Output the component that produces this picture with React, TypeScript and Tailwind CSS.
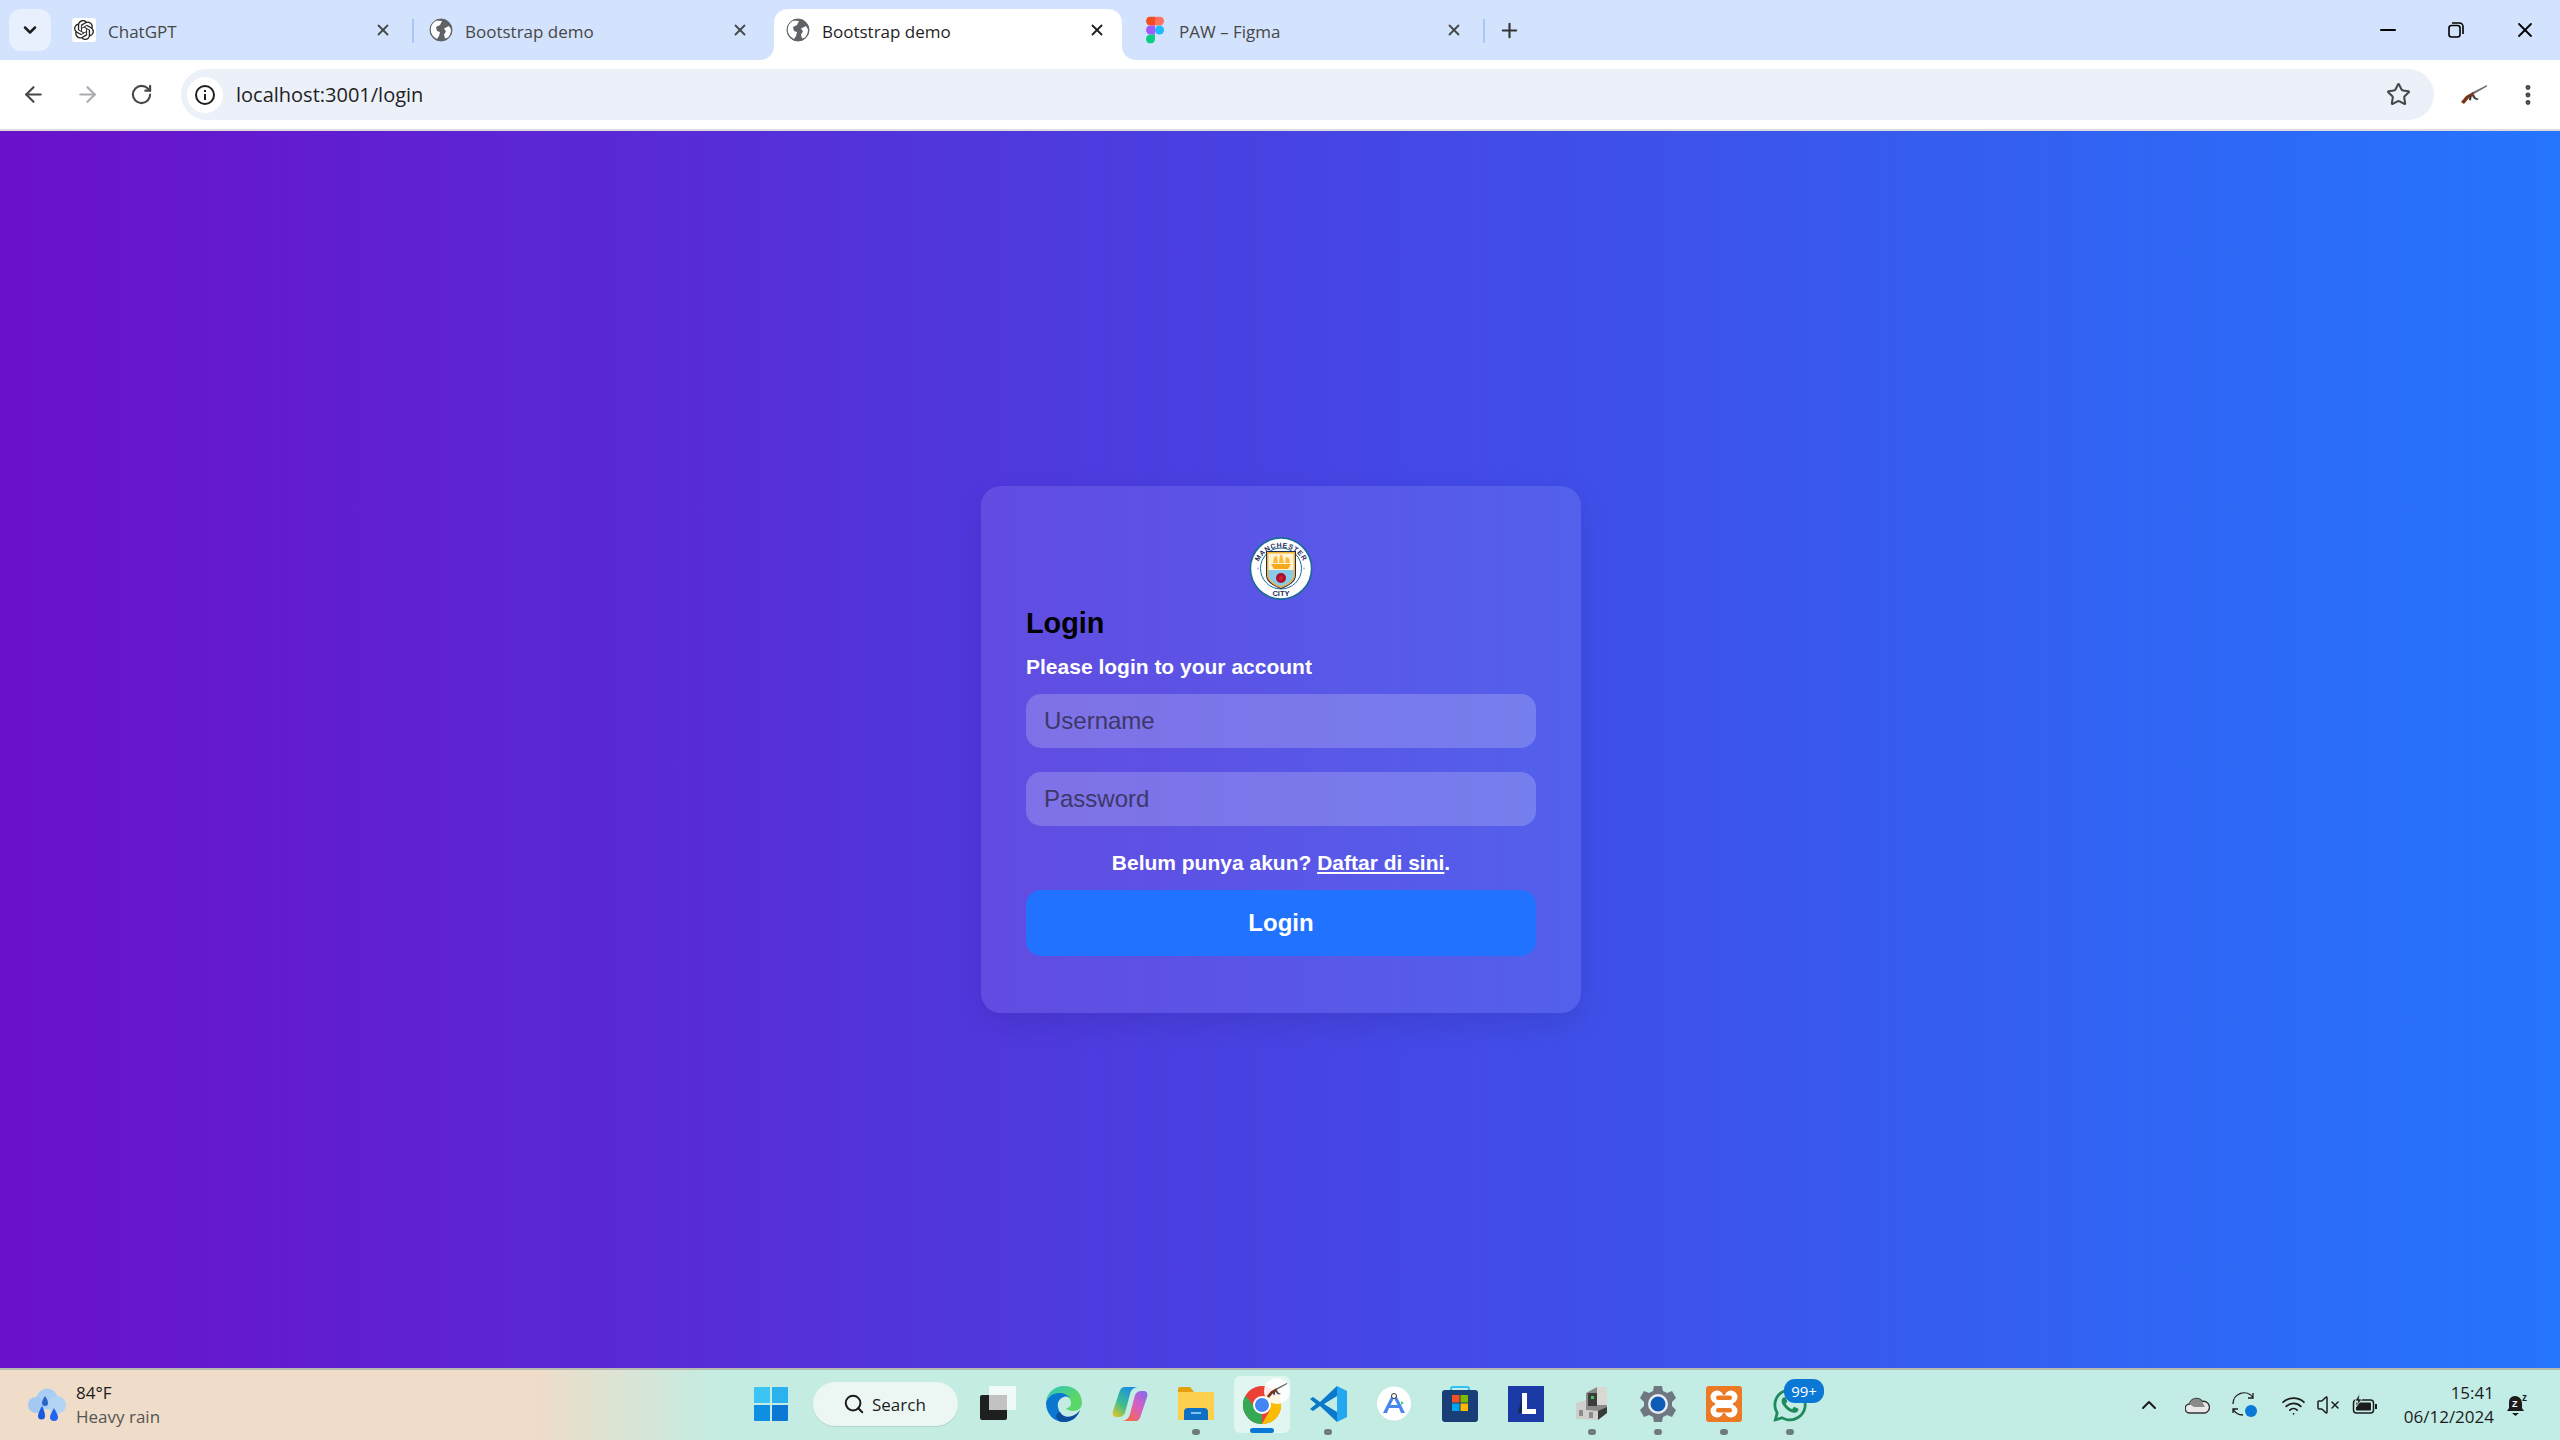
import type { ReactNode } from 'react';
import { ArrowLeft, ArrowRight, ChevronDown, ChevronUp, EllipsisVertical, Minus, Plus, RotateCw, Search, Star, VolumeX, Wifi, X } from 'lucide-react';
import { FaWhatsapp } from 'react-icons/fa';
import { SiOpenai } from 'react-icons/si';

const uiFont = "font-['Open_Sans','Noto_Sans',sans-serif]";

function GlobeIcon() {
  return (
    <svg width="24" height="24" viewBox="0 0 24 24">
      <circle cx="12" cy="12" r="11" fill="#5f6368" />
      <path d="M6 2.500 13 3l-2 4-4 2 1 4 3 1-1 4-2 3C4 19 2 16 1.500 12 1.500 8 3 5 6 2.500zM20 8l2 3.500c0 3-1 6-3 8l-3 1-1-4 2-3-2-3z" fill="#fff" />
      <circle cx="12" cy="12" r="11" fill="none" stroke="#5f6368" strokeWidth="1" />
    </svg>
  );
}

function ChatGptIcon() {
  return (
    <span className="flex h-[24px] w-[24px] items-center justify-center rounded-[3px] bg-white">
      <SiOpenai size={20} color="#222" />
    </span>
  );
}

function FigmaIcon() {
  return (
    <svg width="24" height="24" viewBox="0 0 24 36" className="-my-[6px] h-[36px] w-[24px] scale-75">
      <path d="M0 6a6 6 0 0 1 6-6h6v12H6a6 6 0 0 1-6-6z" fill="#f24e1e" />
      <path d="M12 0h6a6 6 0 0 1 0 12h-6z" fill="#ff7262" />
      <path d="M0 18a6 6 0 0 1 6-6h6v12H6a6 6 0 0 1-6-6z" fill="#a259ff" />
      <circle cx="18" cy="18" r="6" fill="#1abcfe" />
      <path d="M0 30a6 6 0 0 1 6-6h6v6a6 6 0 0 1-12 0z" fill="#0acf83" />
    </svg>
  );
}

function Tab({ icon, title, active }: { icon: ReactNode; title: string; active?: boolean }) {
  return (
    <div
      className={`relative flex h-[51px] w-[348px] shrink-0 items-center pb-[9px] pl-3 pr-4 ${
        active ? 'rounded-t-[14px] bg-white text-[#1f1f1f]' : 'text-[#474747]'
      }`}
    >
      {active && (
        <>
          <div className="absolute bottom-0 -left-[14px] h-[14px] w-[14px] bg-white">
            <div className="h-full w-full rounded-br-[14px] bg-[#d3e3fd]" />
          </div>
          <div className="absolute bottom-0 -right-[14px] h-[14px] w-[14px] bg-white">
            <div className="h-full w-full rounded-bl-[14px] bg-[#d3e3fd]" />
          </div>
        </>
      )}
      <span className="flex w-[24px] justify-center">{icon}</span>
      <span className="ml-3 mt-[2px] flex-1 text-[17px] leading-none">{title}</span>
      <X size={18} strokeWidth={2.4} className={active ? 'text-[#1f1f1f]' : 'text-[#474747]'} />
    </div>
  );
}

function TabSeparator() {
  return (
    <div className="flex h-[51px] w-[9px] shrink-0 items-center justify-center pb-[8px]">
      <div className="h-[24px] w-[2px] bg-[#a8c7fa]" />
    </div>
  );
}

function TabStrip() {
  return (
    <div className={`flex h-[60px] items-end bg-[#d3e3fd] ${uiFont}`}>
      <div className="mb-[9px] ml-[9px] mr-[9px] flex h-[42px] w-[42px] items-center justify-center rounded-[12px] bg-[#e8f0fe]">
        <ChevronDown size={20} strokeWidth={3} className="text-[#1f1f1f]" />
      </div>
      <Tab icon={<ChatGptIcon />} title="ChatGPT" />
      <TabSeparator />
      <Tab icon={<GlobeIcon />} title="Bootstrap demo" />
      <div className="w-[9px] shrink-0" />
      <Tab icon={<GlobeIcon />} title="Bootstrap demo" active />
      <div className="w-[9px] shrink-0" />
      <Tab icon={<FigmaIcon />} title="PAW – Figma" />
      <TabSeparator />
      <div className="flex h-[51px] w-[43px] items-center justify-center pb-[9px]">
        <Plus size={23} strokeWidth={2.2} className="text-[#333]" />
      </div>
      <div className="mb-[18px] ml-auto flex items-center text-black">
        <div className="flex w-[68px] justify-center">
          <Minus size={24} strokeWidth={2} />
        </div>
        <div className="flex w-[68px] justify-center">
          <svg width="16" height="16" viewBox="0 0 16 16" fill="none" stroke="#000" strokeWidth="1.6">
            <rect x="1" y="3.5" width="11" height="11.5" rx="2.5" />
            <path d="M4 1h7.5A3.5 3.5 0 0 1 15 4.500V12" />
          </svg>
        </div>
        <div className="flex w-[70px] justify-center">
          <X size={24} strokeWidth={1.8} />
        </div>
      </div>
    </div>
  );
}

function GunIcon({ size = 28 }: { size?: number }) {
  return (
    <svg width={size} height={(size * 22) / 28} viewBox="0 0 28 22">
      <path d="M27 1 12 8.500l1 2L27 2.500z" fill="#6b6b6b" />
      <path d="M13 8 6 12 1 18l3 2 5-6 5-2.500z" fill="#7a3418" />
      <path d="M12 11.500c1 3 3 4.500 6 4.500l.5-1.500c-2.500-.2-3.500-1.500-4.200-3.800z" fill="#444" />
      <path d="M9.500 12.500 9 16l2 .5.600-4z" fill="#333" />
    </svg>
  );
}

function Toolbar() {
  return (
    <div className={`flex h-[71px] items-center border-b-2 border-[#dcdcdc] bg-white ${uiFont}`}>
      <div className="flex w-[54px] justify-center pl-[12px]">
        <ArrowLeft size={25} strokeWidth={2} className="text-[#474747]" />
      </div>
      <div className="flex w-[54px] justify-center pl-[12px]">
        <ArrowRight size={25} strokeWidth={2} className="text-[#a9abaf]" />
      </div>
      <div className="flex w-[54px] justify-center pl-[12px]">
        <RotateCw size={23} strokeWidth={2.2} className="text-[#474747]" />
      </div>
      <div className="ml-[19px] flex h-[51px] flex-1 items-center rounded-full bg-[#ebf0f9] pl-[6px] pr-[23px]">
        <div className="flex h-[36px] w-[36px] items-center justify-center rounded-full bg-white">
          <svg width="22" height="22" viewBox="0 0 22 22" fill="none" stroke="#1f1f1f" strokeWidth="2">
            <circle cx="11" cy="11" r="9" />
            <path d="M11 10v6M11 6v2" />
          </svg>
        </div>
        <span className="ml-[13px] text-[20px] leading-none text-[#1f1f1f]">localhost:3001/login</span>
        <Star size={25} strokeWidth={2} className="ml-auto text-[#474747]" />
      </div>
      <div className="flex w-[80px] justify-center">
        <GunIcon />
      </div>
      <div className="flex w-[28px] justify-center">
        <EllipsisVertical size={26} strokeWidth={2.6} className="text-[#474747]" />
      </div>
      <div className="w-[18px]" />
    </div>
  );
}

function CityBadge() {
  return (
    <svg width="64" height="65" viewBox="0 0 64 65">
      <defs>
        <path id="badge-top" d="M7.500 36a24.500 24.500 0 0 1 49 0" />
      </defs>
      <circle cx="32" cy="32.500" r="31.500" fill="#1c6a96" />
      <circle cx="32" cy="32.500" r="29.800" fill="#fff" />
      <circle cx="32" cy="32.500" r="20.500" fill="#fff" stroke="#1c6a96" strokeWidth="1" />
      <text fontFamily="Liberation Sans, sans-serif" fontSize="7" fontWeight="700" fill="#1c2c5b" letterSpacing="0.6">
        <textPath href="#badge-top" startOffset="50%" textAnchor="middle">
          MANCHESTER
        </textPath>
      </text>
      <text x="32" y="60" textAnchor="middle" fontFamily="Liberation Sans, sans-serif" fontSize="7.500" fontWeight="700" fill="#1c2c5b">
        CITY
      </text>
      <path d="M17 15h30v24c0 7-7 11-15 14-8-3-15-7-15-14z" fill="#1c2c5b" />
      <path d="M18 16h28v23c0 6-6 10-14 13-8-3-14-7-14-13z" fill="#f5b335" />
      <path d="M19.500 17.500h25V34h-25z" fill="#fff3d6" />
      <path d="M19.500 34h25v5c0 5-5 9-12.500 11.500C24.500 48 19.500 44 19.500 39z" fill="#8ccbe8" />
      <path d="M22 28h20l-3 5H25z" fill="#f7a81b" />
      <path d="M24 27l1-6 3-1 1 7zM30 27l1-8 2 0 2 8zM36 27l1-6 3 1 1 5z" fill="#f9b93e" />
      <circle cx="32" cy="42" r="5" fill="#a8102d" />
      <circle cx="32" cy="42" r="2" fill="#d82038" />
      <circle cx="9" cy="32.500" r="1" fill="#8ccbe8" />
      <circle cx="55" cy="32.500" r="1" fill="#8ccbe8" />
    </svg>
  );
}

function LoginCard() {
  return (
    <div className="ml-[2px] w-[600px] rounded-[20px] bg-white/10 px-[45px] pb-[57px] pt-[50px] shadow-[0_10px_30px_rgba(0,0,0,0.1)] font-['Liberation_Sans',Arial,sans-serif]">
      <div className="mb-[5px] flex justify-center">
        <CityBadge />
      </div>
      <h3 className="text-[28.8px] font-bold leading-[35px] text-black">Login</h3>
      <p className="mt-[10px] text-[21px] font-bold leading-[31px] text-white">Please login to your account</p>
      <input
        placeholder="Username"
        className="mt-[12px] block h-[54px] w-full rounded-[15px] bg-white/20 px-[18px] text-[24px] text-white outline-none placeholder:text-[#3d3868]"
      />
      <input
        placeholder="Password"
        className="mt-[24px] block h-[54px] w-full rounded-[15px] bg-white/20 px-[18px] text-[24px] text-white outline-none placeholder:text-[#3d3868]"
      />
      <p className="mt-[22px] text-center text-[21px] font-bold leading-[30px] text-white">
        Belum punya akun? <a className="underline">Daftar di sini</a>.
      </p>
      <button className="mt-[12px] block h-[66px] w-full rounded-[15px] bg-[#2173ff] text-[24px] font-bold text-white">
        Login
      </button>
    </div>
  );
}

function WeatherIcon() {
  return (
    <svg width="38" height="34" viewBox="0 0 38 34">
      <circle cx="19" cy="11" r="10.500" fill="#a9cdf5" />
      <circle cx="8" cy="17" r="8" fill="#a3c8f3" />
      <circle cx="29" cy="17" r="9" fill="#b4d4f6" />
      <path d="M17 8c2 3 3 5 3 7a3 3 0 0 1-6 0c0-2 1-4 3-7z" fill="#2b63c9" />
      <path d="M14 18c2 4 3 7 3 10a3.500 3.500 0 0 1-7 0c0-3 2-6 4-10z" fill="#1a5ae0" />
      <path d="M26 20c2 4 4 7 4 9a4 4 0 0 1-8 0c0-2 2-5 4-9z" fill="#1f66f0" />
    </svg>
  );
}

function WindowsIcon() {
  return (
    <svg width="36" height="36" viewBox="0 0 36 36">
      <path d="M1 2a1 1 0 0 1 1-1h15v16H1z" fill="#3cc4f4" />
      <path d="M19 1h15a1 1 0 0 1 1 1v15H19z" fill="#2ab2ee" />
      <path d="M1 19h16v16H2a1 1 0 0 1-1-1z" fill="#0f8fe2" />
      <path d="M19 19h16v15a1 1 0 0 1-1 1H19z" fill="#0a78d4" />
    </svg>
  );
}

function TaskViewIcon() {
  return (
    <svg width="36" height="36" viewBox="0 0 36 36">
      <rect x="0" y="9" width="27" height="25" rx="2" fill="#1f1f1f" />
      <rect x="9" y="0" width="27" height="24" rx="1.500" fill="#fff" fillOpacity="0.75" />
      <rect x="9" y="9" width="18" height="15" fill="#c2c2c2" />
    </svg>
  );
}

function EdgeIcon() {
  return (
    <svg width="36" height="36" viewBox="0 0 36 36">
      <defs>
        <linearGradient id="edge-a" x1="0" y1="0" x2="1" y2="1">
          <stop offset="0" stopColor="#2dc3c8" />
          <stop offset="0.6" stopColor="#5ad66a" />
        </linearGradient>
      </defs>
      <path d="M18 0c11 0 18 7 18 17 0 5-4 8-9 8-3 0-6-1-7-3 3 0 5-2 5-5 0-6-6-9-12-9S2 10 0 16C1 7 8 0 18 0z" fill="url(#edge-a)" />
      <path d="M0 17c1-6 7-10 13-10 5 0 9 2 11 5-2-1-4-2-6-1-4 1-7 5-6 10 1 6 6 12 13 13-2 1-5 2-7 2C8 36 0 28 0 17z" fill="#0c77d1" />
      <path d="M14 26c2 4 7 6 12 4 3-1 6-3 8-6-2 7-8 12-16 12-3 0-5-1-6-2-3-3-2-7 2-8z" fill="#0a4f9e" />
    </svg>
  );
}

function CopilotIcon() {
  return (
    <svg width="36" height="36" viewBox="0 0 36 36">
      <defs>
        <linearGradient id="cp-a" x1="0" y1="1" x2="0.700" y2="0">
          <stop offset="0" stopColor="#f5c518" />
          <stop offset="0.45" stopColor="#3fbd8d" />
          <stop offset="1" stopColor="#1a8fe8" />
        </linearGradient>
        <linearGradient id="cp-b" x1="1" y1="0" x2="0.200" y2="1">
          <stop offset="0" stopColor="#7f6bf0" />
          <stop offset="0.5" stopColor="#d85fc4" />
          <stop offset="1" stopColor="#f56a3c" />
        </linearGradient>
      </defs>
      <path d="M12 1h14c-4 0-7 3-8 7l-5 19c-1 2-3 4-6 4H4c-3 0-4-3-3-6L7 7c1-4 3-6 5-6z" fill="url(#cp-a)" />
      <path d="M24 35H10c4 0 7-3 8-7l5-19c1-2 3-4 6-4h3c3 0 4 3 3 6l-6 18c-1 4-3 6-5 6z" fill="url(#cp-b)" />
    </svg>
  );
}

function ExplorerIcon() {
  return (
    <svg width="36" height="36" viewBox="0 0 36 36">
      <path d="M0 3a2 2 0 0 1 2-2h10l4 5h18a2 2 0 0 1 2 2v6H0z" fill="#e3a00a" />
      <path d="M0 6h36v27a1 1 0 0 1-1 1H1a1 1 0 0 1-1-1z" fill="#fdcf4f" />
      <path d="M6 34V26a4 4 0 0 1 4-4h16a4 4 0 0 1 4 4v8z" fill="#0f6fc2" />
      <rect x="13" y="26" width="10" height="2" fill="#7ec4f2" />
    </svg>
  );
}

function ChromeIcon() {
  return (
    <svg width="38" height="38" viewBox="0 0 38 38">
      <circle cx="19" cy="19" r="19" fill="#ea4335" />
      <path d="M19 19 2.500 28.500A19 19 0 0 1 2.500 9.500L10 19z" fill="#34a853" />
      <path d="M19 38A19 19 0 0 1 2.500 28.500L11 19l8 9z" fill="#34a853" />
      <path d="M19 10h17a19 19 0 0 1-17 28l8-14z" fill="#fbbc04" />
      <circle cx="19" cy="19" r="9" fill="#fff" />
      <circle cx="19" cy="19" r="7" fill="#4285f4" />
    </svg>
  );
}

function VsCodeIcon() {
  return (
    <svg width="37" height="36" viewBox="0 0 37 36">
      <path d="M27 0 37 5v26l-10 5z" fill="#22a7f0" />
      <path d="M27 0 10 16 3 11 0 13l6 5-6 5 3 2 7-5 17 16V26L14 18 27 10z" fill="#0a79c9" />
    </svg>
  );
}

function StudioIcon() {
  return (
    <svg width="34" height="35" viewBox="0 0 34 35">
      <circle cx="17" cy="17.500" r="17" fill="#fff" />
      <path d="M24 15l3 2-3 2z" fill="#3ddc84" />
      <path d="M15 9 6 27h4l2-5h10l2 5h4L19 9zM13.500 19l3.500-7 3.500 7z" fill="#4a86f0" />
      <circle cx="17" cy="10" r="2.500" fill="#fff" stroke="#333" strokeWidth="1" />
    </svg>
  );
}

function StoreIcon() {
  return (
    <svg width="36" height="36" viewBox="0 0 36 36">
      <path d="M9 8V3a2 2 0 0 1 2-2h14a2 2 0 0 1 2 2v5" fill="none" stroke="#31c1f4" strokeWidth="2" />
      <path d="M0 7a3 3 0 0 1 3-3h30a3 3 0 0 1 3 3v26a3 3 0 0 1-3 3H3a3 3 0 0 1-3-3z" fill="#1a3f76" />
      <rect x="10" y="9" width="7.500" height="7.500" fill="#f25022" />
      <rect x="18.500" y="9" width="7.500" height="7.500" fill="#7fba00" />
      <rect x="10" y="17.500" width="7.500" height="7.500" fill="#00a4ef" />
      <rect x="18.500" y="17.500" width="7.500" height="7.500" fill="#ffb900" />
    </svg>
  );
}

function LauncherIcon() {
  return (
    <svg width="36" height="36" viewBox="0 0 36 36">
      <rect width="36" height="36" fill="#1b3aa6" />
      <path d="M10 27 14 10v17z" fill="#0b2a55" />
      <path d="M14 7h5v16h9v5H14z" fill="#fff" />
    </svg>
  );
}

function PrinterIcon() {
  return (
    <svg width="34" height="36" viewBox="0 0 34 36">
      <path d="M11 7 22 1h10v20l-5 5H11z" fill="#8a8a8a" />
      <path d="M22 1h10v18H22z" fill="#d9d9d4" />
      <rect x="13" y="7" width="9" height="13" fill="#3c3c3c" />
      <rect x="16" y="10" width="3" height="3" fill="#47c35a" />
      <path d="M1 17 11 14v10l12 1v9l-22-1z" fill="#cfcfcb" />
      <rect x="4" y="24" width="4" height="6" fill="#8c8c8c" />
      <rect x="14" y="26" width="4" height="6" fill="#8c8c8c" />
      <path d="M23 25l9-4v6l-9 7z" fill="#3a3a3a" />
    </svg>
  );
}

function GearIcon() {
  return (
    <svg width="36" height="36" viewBox="0 0 36 36">
      <path
        d="M14 0h8l1 5 4 2 5-2 4 7-4 4v4l4 4-4 7-5-2-4 2-1 5h-8l-1-5-4-2-5 2-4-7 4-4v-4L0 12l4-7 5 2 4-2z"
        fill="#6e7681"
      />
      <circle cx="18" cy="18" r="10" fill="#e9eef2" />
      <circle cx="18" cy="18" r="7.500" fill="#0f5cb8" />
    </svg>
  );
}

function XamppIcon() {
  return (
    <svg width="36" height="36" viewBox="0 0 36 36">
      <rect width="36" height="36" rx="3" fill="#ec7a24" />
      <g fill="#fff">
        <circle cx="11" cy="11" r="6.500" />
        <circle cx="25" cy="11" r="6.500" />
        <circle cx="11" cy="25" r="6.500" />
        <circle cx="25" cy="25" r="6.500" />
        <rect x="9" y="9" width="18" height="18" />
      </g>
      <g fill="#ec7a24">
        <rect x="10" y="9.500" width="16" height="4.500" rx="2.200" />
        <rect x="10" y="22" width="16" height="4.500" rx="2.200" />
        <path d="M2 18l5-2v4zM34 18l-5-2v4z" />
      </g>
    </svg>
  );
}

function TaskSlot({ children, dot, active }: { children: ReactNode; dot?: boolean; active?: boolean }) {
  return (
    <div className="relative flex h-[70px] w-[66px] shrink-0 justify-center pt-[16px]">
      {active && <div className="absolute bottom-[7px] left-[5px] right-[5px] top-[6px] rounded-[6px] bg-white/50" />}
      <div className="relative h-[36px]">{children}</div>
      {dot && <div className="absolute bottom-[5px] left-1/2 h-[6px] w-[8px] -translate-x-1/2 rounded-full bg-[#6e7b7a]" />}
      {active && <div className="absolute bottom-[7px] left-1/2 h-[5px] w-[24px] -translate-x-1/2 rounded-full bg-[#0a78d4]" />}
    </div>
  );
}

function Taskbar() {
  return (
    <div className={`flex h-[72px] items-start border-t-2 border-[#b4b8ae] bg-[linear-gradient(to_right,#efdcc9_0%,#efdcc9_21%,#c4ece2_28%,#c2ece6_100%)] text-[#1c1c1c] ${uiFont}`}>
      <div className="flex h-[70px] w-[738px] shrink-0 items-center pl-[28px]">
        <WeatherIcon />
        <div className="ml-[10px] text-[17px] leading-[24px]">
          <div>84°F</div>
          <div className="text-[#555]">Heavy rain</div>
        </div>
      </div>
      <TaskSlot>
        <WindowsIcon />
      </TaskSlot>
      <div className="ml-[9px] mt-[12px] flex h-[44px] w-[145px] items-center rounded-full bg-[#ecf7f4] pl-[30px] shadow-[0_1px_1px_rgba(0,0,0,0.1)]">
        <Search size={22} strokeWidth={2.2} className="text-[#1c1c1c]" />
        <span className="ml-[7px] text-[17px] leading-none">Search</span>
      </div>
      <div className="ml-[7px] flex">
        <TaskSlot>
          <TaskViewIcon />
        </TaskSlot>
        <TaskSlot>
          <EdgeIcon />
        </TaskSlot>
        <TaskSlot>
          <CopilotIcon />
        </TaskSlot>
        <TaskSlot dot>
          <ExplorerIcon />
        </TaskSlot>
        <TaskSlot active>
          <ChromeIcon />
          <span className="absolute -right-[9px] -top-[8px] flex h-[26px] w-[26px] items-center justify-center rounded-full bg-white/90">
            <GunIcon size={22} />
          </span>
        </TaskSlot>
        <TaskSlot dot>
          <VsCodeIcon />
        </TaskSlot>
        <TaskSlot>
          <StudioIcon />
        </TaskSlot>
        <TaskSlot>
          <StoreIcon />
        </TaskSlot>
        <TaskSlot>
          <LauncherIcon />
        </TaskSlot>
        <TaskSlot dot>
          <PrinterIcon />
        </TaskSlot>
        <TaskSlot dot>
          <GearIcon />
        </TaskSlot>
        <TaskSlot dot>
          <XamppIcon />
        </TaskSlot>
        <TaskSlot dot>
          <FaWhatsapp size={38} color="#1f8a5b" />
          <span className="absolute -right-[15px] -top-[7px] flex h-[24px] w-[40px] items-center justify-center rounded-[11px] bg-[#0a78d4] text-[15px] leading-none text-white">
            99+
          </span>
        </TaskSlot>
      </div>
      <div className="ml-auto flex h-[70px] items-center pr-[18px]">
        <div className="flex w-[48px] justify-center">
          <ChevronUp size={24} strokeWidth={2} />
        </div>
        <div className="flex w-[48px] justify-center">
          <svg width="25" height="18" viewBox="0 0 25 18">
            <path d="M5 17a4.500 4.500 0 0 1-.5-9A7 7 0 0 1 17 5.500 5.500 5.500 0 0 1 20 17z" fill="#e8e8e8" stroke="#333" strokeWidth="1.400" />
            <path d="M4.500 8A7 7 0 0 1 17 5.500L20 11H9z" fill="#8a8a8a" />
          </svg>
        </div>
        <div className="flex w-[48px] justify-center">
          <svg width="26" height="26" viewBox="0 0 26 26" fill="none" stroke="#1c1c1c" strokeWidth="1.300">
            <path d="M1 12A11 11 0 0 1 21 5.500M21 1v5h-5M1 21v-4h5M1 17c2 4 6 6 10 6" />
            <circle cx="19" cy="19" r="6" fill="#0a78d4" stroke="none" />
          </svg>
        </div>
        <div className="flex w-[48px] justify-center">
          <Wifi size={25} strokeWidth={1.7} />
        </div>
        <div className="flex w-[22px] justify-center">
          <VolumeX size={24} strokeWidth={1.500} className="shrink-0" />
        </div>
        <div className="flex w-[52px] justify-center">
          <svg width="26" height="24" viewBox="0 0 26 24" fill="none">
            <rect x="1.500" y="7" width="20" height="13" rx="3" stroke="#1c1c1c" strokeWidth="1.500" />
            <rect x="4" y="9.500" width="15" height="8" rx="1" fill="#1c1c1c" />
            <path d="M24 11v5" stroke="#1c1c1c" strokeWidth="2" />
            <path d="M8 0 3 8h3l-2 6 6-8H7z" fill="#1c1c1c" stroke="#c2ece6" strokeWidth="0.800" />
          </svg>
        </div>
        <div className="w-[103px] text-right text-[17px] leading-[24px]">
          <div>15:41</div>
          <div>06/12/2024</div>
        </div>
        <div className="flex w-[48px] justify-center">
          <svg width="24" height="24" viewBox="0 0 24 24">
            <path d="M9 3a7 7 0 0 1 7 7v5l2 3H1l2-3v-5a6 6 0 0 1 6-7z" fill="#1c1c1c" />
            <path d="M6 20h7l-3.500 3z" fill="#1c1c1c" />
            <text x="6" y="14" fontSize="9" fontWeight="700" fill="#fff" fontFamily="Liberation Sans, sans-serif">Z</text>
            <text x="16" y="8" fontSize="10" fontWeight="700" fill="#1c1c1c" fontFamily="Liberation Sans, sans-serif">z</text>
          </svg>
        </div>
      </div>
    </div>
  );
}

export default function App() {
  return (
    <div className="flex h-[1440px] w-[2560px] flex-col overflow-hidden">
      <TabStrip />
      <Toolbar />
      <main className="flex flex-1 items-center justify-center bg-[linear-gradient(to_right,#6a11cb,#2575fc)]">
        <LoginCard />
      </main>
      <Taskbar />
    </div>
  );
}
